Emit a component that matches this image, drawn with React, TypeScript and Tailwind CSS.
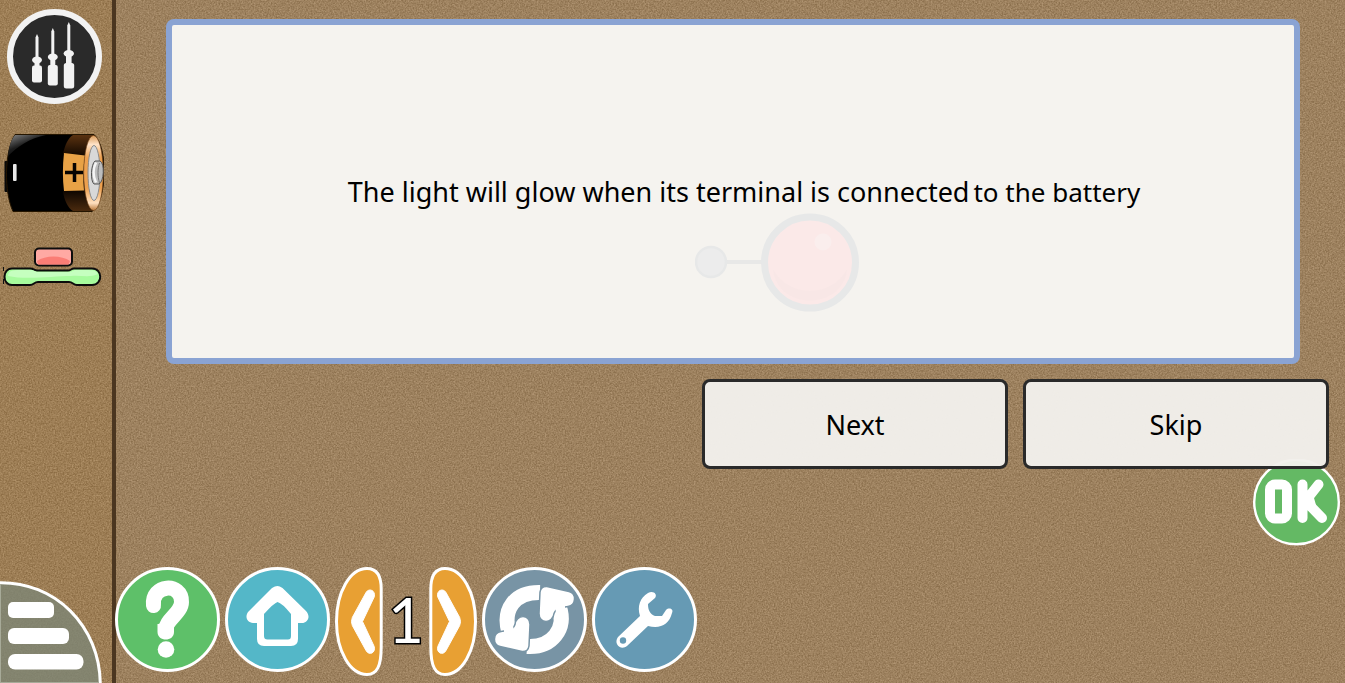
import type { ReactNode } from 'react';

function Texture({ id }: { id: string }) {
  return (
    <svg className="pointer-events-none absolute inset-0 -z-10 h-full w-full" aria-hidden="true">
      <filter id={id} x="0" y="0" width="100%" height="100%" colorInterpolationFilters="sRGB">
        <feTurbulence type="fractalNoise" baseFrequency="0.65" numOctaves="3" seed="4" result="n" />
        <feColorMatrix
          in="n"
          type="matrix"
          values="1.200 1.200 0 0 -0.720  1.200 1.200 0 0 -0.730  1.200 1.200 0 0 -0.740  0 0 0 0 1"
        />
      </filter>
      <rect width="100%" height="100%" filter={`url(#${id})`} opacity="0.14" />
    </svg>
  );
}

function Tools() {
  return (
    <svg className="h-24 w-24" viewBox="0 0 96 96" aria-hidden="true">
      <circle cx="48.500" cy="48.500" r="44.500" fill="#2a2a2a" stroke="#f2f2f2" strokeWidth="6" />
      <g fill="#f2f2f2" transform="translate(1 .5)">
        <path d="M28.500 29l1.500-3.500 1.500 3.500v20h-3z" />
        <ellipse cx="30" cy="51.500" rx="5" ry="3.500" />
        <path d="M27.500 53h5v6h-5z" />
        <rect x="25" y="57" width="10" height="17" rx="2" />
        <path d="M44.300 23l1.500-3.500 1.500 3.500v25h-3z" />
        <ellipse cx="45.800" cy="48.500" rx="5" ry="3.500" />
        <path d="M43.300 50h5v8h-5z" />
        <rect x="40.800" y="56.500" width="10" height="20.500" rx="2" />
        <path d="M60.300 17l1.500-3.500 1.500 3.500v26h-3z" />
        <ellipse cx="61.800" cy="45" rx="5.200" ry="3.500" />
        <path d="M59 46h5.600v11H59z" />
        <rect x="56.800" y="54.500" width="10.400" height="25.500" rx="2.500" />
      </g>
    </svg>
  );
}

function Battery() {
  return (
    <svg className="h-[78px] w-[100px]" viewBox="0 0 100 78" aria-hidden="true">
      <defs>
        <linearGradient id="shine" x1="0" y1="0" x2="0.7" y2="1">
          <stop offset="0" stopColor="#888" />
          <stop offset="0.5" stopColor="#1c1c1c" />
          <stop offset="1" stopColor="#000" />
        </linearGradient>
        <linearGradient id="bandTop" x1="0" y1="0" x2="0" y2="1">
          <stop offset="0" stopColor="#5a3210" />
          <stop offset="1" stopColor="#120800" />
        </linearGradient>
        <linearGradient id="bandBottom" x1="0" y1="0" x2="0" y2="1">
          <stop offset="0" stopColor="#0c0500" />
          <stop offset="1" stopColor="#4a2a0e" />
        </linearGradient>
        <linearGradient id="cap" x1="0" y1="0" x2="0" y2="1">
          <stop offset="0" stopColor="#d99a58" />
          <stop offset="0.120" stopColor="#ffe3c8" />
          <stop offset="0.300" stopColor="#eda04e" />
          <stop offset="0.700" stopColor="#eda04e" />
          <stop offset="0.900" stopColor="#ffe0c0" />
          <stop offset="1" stopColor="#b9783a" />
        </linearGradient>
      </defs>
      <rect x="0.500" y="27" width="5" height="31" rx="1" fill="#0a0a0a" />
      <path d="M11 .5H90C104 13 104 65 88 77.500H9C0 58 0 18 11 .5z" fill="#000" stroke="#241500" />
      <path d="M11 1H42C26 4 13 13 4 22C5 12 7 6 11 1z" fill="url(#shine)" />
      <path d="M69 1h22c-5 3-9 11-10 21L59 20C61 11 64 4 69 1z" fill="url(#bandTop)" />
      <path d="M59 57l22-1c1 9 4 17 8 21H69c-5-3-9-11-10-20z" fill="url(#bandBottom)" />
      <path d="M60 19l21 2.500c-2 12-2 24-1 35l-20 .5c-1.500-12-1.500-25 0-38z" fill="#e8a246" />
      <path d="M70.500 29v19M61 38.500h18" stroke="#080400" strokeWidth="3.500" />
      <ellipse cx="89.500" cy="39" rx="9.800" ry="37.500" fill="url(#cap)" stroke="#6b3e14" strokeWidth=".6" />
      <ellipse cx="90" cy="39" rx="6" ry="27.500" fill="#d8d8d8" stroke="#8b8b8b" />
      <path d="M91 27h5c5 2 4 21-1 23h-5c-4-3-3-20 1-23z" fill="#bdbdbd" stroke="#555" />
      <path d="M92 28.500c-3 6-3 14 0 20" stroke="#f5f5f5" strokeWidth="2.500" fill="none" />
      <path d="M95.500 29c-2 6-2 13 0 20" stroke="#777" strokeWidth="1" fill="none" />
      <rect x="9" y="30" width="3.600" height="17" rx="1" fill="#e9e9e9" />
    </svg>
  );
}

function SwitchPart() {
  return (
    <svg className="h-10 w-[100px]" viewBox="0 0 100 40" aria-hidden="true">
      <rect x="32" y="1.500" width="37" height="17" rx="4" fill="#ffa9a3" stroke="#0c0c0c" strokeWidth="2" />
      <path d="M34 14c8-6 25-6 33 0l-1.500 3.500H35z" fill="#fa7d75" />
      <path
        d="M9 21.500H27c4 0 4 2 7 2H65c3 0 3-2 6-2H89c11 0 11 16.500 0 16.500H74c-4 0-4-3-8-3H35c-4 0-4 3-8 3H9C-1 38-1 21.500 9 21.500z"
        fill="#a7fb9d"
        stroke="#0c0c0c"
        strokeWidth="2"
      />
      <path d="M5 29c1-7 5-6 22-6 5 0 5 2 8 2h30c5 0 5-2 8-2 14 0 20-1 22 4-8 4-17 1-27 2-18 0-45 4-63 0z" fill="#c5ffbf" />
      <path d="M.5 20v4M.5 32v5" stroke="#111" />
    </svg>
  );
}

function MenuQuarter() {
  return (
    <svg className="h-[102px] w-[102px]" viewBox="0 0 102 102" aria-hidden="true">
      <path d="M-2 1.700C55 0 100.300 45 100.300 104H-2z" fill="#7d8676" fillOpacity="0.8" stroke="#fff" strokeWidth="3" />
      <path d="M.5 3v98M0 101.500h99" stroke="#a7aa98" strokeWidth="1" />
      <g fill="#fff">
        <rect x="8" y="21" width="46" height="16" rx="5" />
        <rect x="8" y="47" width="61" height="16" rx="6" />
        <rect x="8" y="73" width="75.500" height="15.500" rx="7" />
      </g>
    </svg>
  );
}

function Round({ label, fill, children }: { label: string; fill: string; children: ReactNode }) {
  return (
    <button type="button" aria-label={label} className="shrink-0">
      <svg className="block h-[105px] w-[105px]" viewBox="0 0 105 105" aria-hidden="true">
        <circle cx="52.500" cy="52.500" r="51" fill={fill} stroke="#fff" strokeWidth="3" />
        {children}
      </svg>
    </button>
  );
}

function Arrow({ label, flip }: { label: string; flip?: boolean }) {
  return (
    <button type="button" aria-label={label} className="shrink-0">
      <svg className="block h-[109px] w-12" viewBox="0 0 48 109" aria-hidden="true">
        <g transform={flip ? 'translate(48 0) scale(-1 1)' : undefined}>
          <path
            d="M32 1.500C42 1.500 46.200 9 46.200 22V80C46.200 99 42 107.500 32 107.500C15 107.500 1.500 84 1.500 54.500S15 1.500 32 1.500z"
            fill="#e8a033"
            stroke="#fff"
            strokeWidth="3"
          />
          <path
            d="M31 25.500L17.300 50.500Q15.700 54.500 17.300 58.500L31 83.500C34 89 41 86 39.200 79.500L27.500 54.500 39.200 30C41 23.500 34 20.500 31 25.500z"
            fill="#fff"
            stroke="#fff"
          />
        </g>
      </svg>
    </button>
  );
}

export default function App() {
  return (
    <div className="flex min-h-screen font-['Noto_Sans',sans-serif] text-black">
      <aside className="relative isolate flex w-[116px] shrink-0 flex-col items-start border-r-4 border-[#4b3620] bg-[#a37f50]">
        <Texture id="grain-side" />
        <button type="button" aria-label="Tools" className="mt-2 ml-1.5">
          <Tools />
        </button>
        <button type="button" aria-label="Battery" className="mt-[30px] ml-1">
          <Battery />
        </button>
        <button type="button" aria-label="Switch" className="mt-[35px] ml-[3px]">
          <SwitchPart />
        </button>
        <button type="button" aria-label="Menu" className="mt-auto">
          <MenuQuarter />
        </button>
      </aside>
      <main className="relative isolate flex min-w-0 flex-1 flex-col bg-[#a3835b] pt-[19px] pb-[7px]">
        <Texture id="grain-main" />
        <section className="relative mr-[45px] ml-[50px] flex flex-1 items-center justify-center rounded-lg border-6 border-[#8aa3d3] bg-[#f5f3ef]">
          <svg
            className="absolute top-1/2 left-1/2 mt-[21px] -ml-[38px] h-[100px] w-[164px]"
            viewBox="0 0 164 100"
            aria-hidden="true"
          >
            <path d="M32 49H67" stroke="#e8e8e7" strokeWidth="4" />
            <circle cx="16" cy="49" r="15" fill="#ececec" stroke="#e7e8e8" strokeWidth="2.500" />
            <circle cx="115" cy="49.500" r="45.500" fill="#fbe9e8" stroke="#e7e8e8" strokeWidth="7" />
            <path d="M78 56c14 29 60 29 74 0-4 42-70 42-74 0z" fill="#f8e7e6" />
            <circle cx="128" cy="29" r="8.500" fill="#faeeed" />
          </svg>
          <p className="relative flex items-baseline gap-1 pl-[22px] text-[27px] leading-9 whitespace-nowrap">
            <span>The light will glow when its terminal is connected</span>
            <span className="text-[26px]">to the battery</span>
          </p>
        </section>
        <div className="relative z-10 mt-[15px] mr-4 flex justify-end gap-[15px]">
          <button type="button" className="h-[90px] w-[306px] rounded-lg border-3 border-[#2a2a2a] bg-[#f2efeb]/97 pt-0.5 text-[27px]">
            Next
          </button>
          <button type="button" className="h-[90px] w-[306px] rounded-lg border-3 border-[#2a2a2a] bg-[#f2efeb]/97 pt-0.5 text-[27px]">
            Skip
          </button>
        </div>
        <button type="button" aria-label="OK" className="-mt-2.5 mr-[5px] self-end">
          <svg className="block h-[87px] w-[87px]" viewBox="0 0 87 87" aria-hidden="true">
            <circle cx="43.500" cy="43" r="42.300" fill="#64b964" stroke="#fff" strokeWidth="2.400" />
            <g fill="none" stroke="#fff" strokeWidth="10" strokeLinecap="round" strokeLinejoin="round">
              <rect x="17" y="25.500" width="17" height="34" rx="5" />
              <path d="M49.500 25.500v33.500M65.500 25.500L52.500 42 69 59" />
            </g>
            <path d="M50 38l9-6 4 14-7 6-7-5z" fill="#fff" />
          </svg>
        </button>
        <nav aria-label="Activity" className="mt-[21px] -ml-px flex items-start gap-[5px]">
          <Round label="Help" fill="#5ec069">
            <path
              d="M38.500 38.500C36 17 67 15 66.500 35c0 11-16 18-16 28"
              fill="none"
              stroke="#fff"
              strokeWidth="15"
              strokeLinecap="round"
              strokeLinejoin="round"
            />
            <path d="M42.500 57l16.500-1v9c0 10-16.500 10-16.500 0z" fill="#fff" />
            <circle cx="51" cy="82.500" r="8.300" fill="#fff" />
          </Round>
          <Round label="Home" fill="#54b7c8">
            <path
              d="M52.500 19q2 0 5 2L81 44c6 7 0 13-5 12h-3v16q0 7-7 7H39q-7 0-7-7V56h-4c-6 0-9-7-4-12l23-23q3-2 5.500-2zm0 16Q49 36 39 47V69q0 3.500 3.500 3.500H63q3 0 3-3.500V47Q57 36 52.500 35z"
              fill="#fff"
              fillRule="evenodd"
            />
          </Round>
          <Arrow label="Previous level" />
          <span className="flex h-[105px] w-9 items-center justify-center pb-0.5 font-['Lato',sans-serif] text-[62px] leading-none text-white [-webkit-text-stroke:3px_black] [paint-order:stroke_fill]">
            1
          </span>
          <Arrow label="Next level" flip />
          <Round label="Reload" fill="#7894a5">
            <path d="M27 66C20 42 33 25 58 25.500" fill="none" stroke="#fff" strokeWidth="15" />
            <path d="M77 39C85 62 70 81 45 79.500" fill="none" stroke="#fff" strokeWidth="15" />
            <path
              d="M65 19.500l22 5c8 2 7 14-1 15l-6 1c-5 1-7 3-8 6-1 10-15 11-15 0l1-21.500q1-6 7-5.500z"
              fill="#fff"
              stroke="#7894a5"
              strokeWidth="1.500"
            />
            <path
              d="M40 84.500l-22-5c-8-2-7-14 1-15l6-1c5-1 7-3 8-6 1-10 15-11 15 0l-1 21.500q-1 6-7 5.500z"
              fill="#fff"
              stroke="#7894a5"
              strokeWidth="1.500"
            />
            <path d="M72 30h11v17l-9-1zM22 57l9 1 2 16H22z" fill="#fff" />
          </Round>
          <Round label="Settings" fill="#669ab4">
            <path
              d="M56 26c5-3 10 1 7 5l-7 6c0 6 2 10 7 12l7 0 4-6c3-3 8-1 6 3-3 12-12 16-24 13L35 79c-6 5-14-2-9-9l22-21c-3-10 0-18 8-23z"
              fill="#fff"
            />
            <circle cx="31" cy="73.500" r="3.200" fill="#669ab4" />
          </Round>
        </nav>
      </main>
    </div>
  );
}
